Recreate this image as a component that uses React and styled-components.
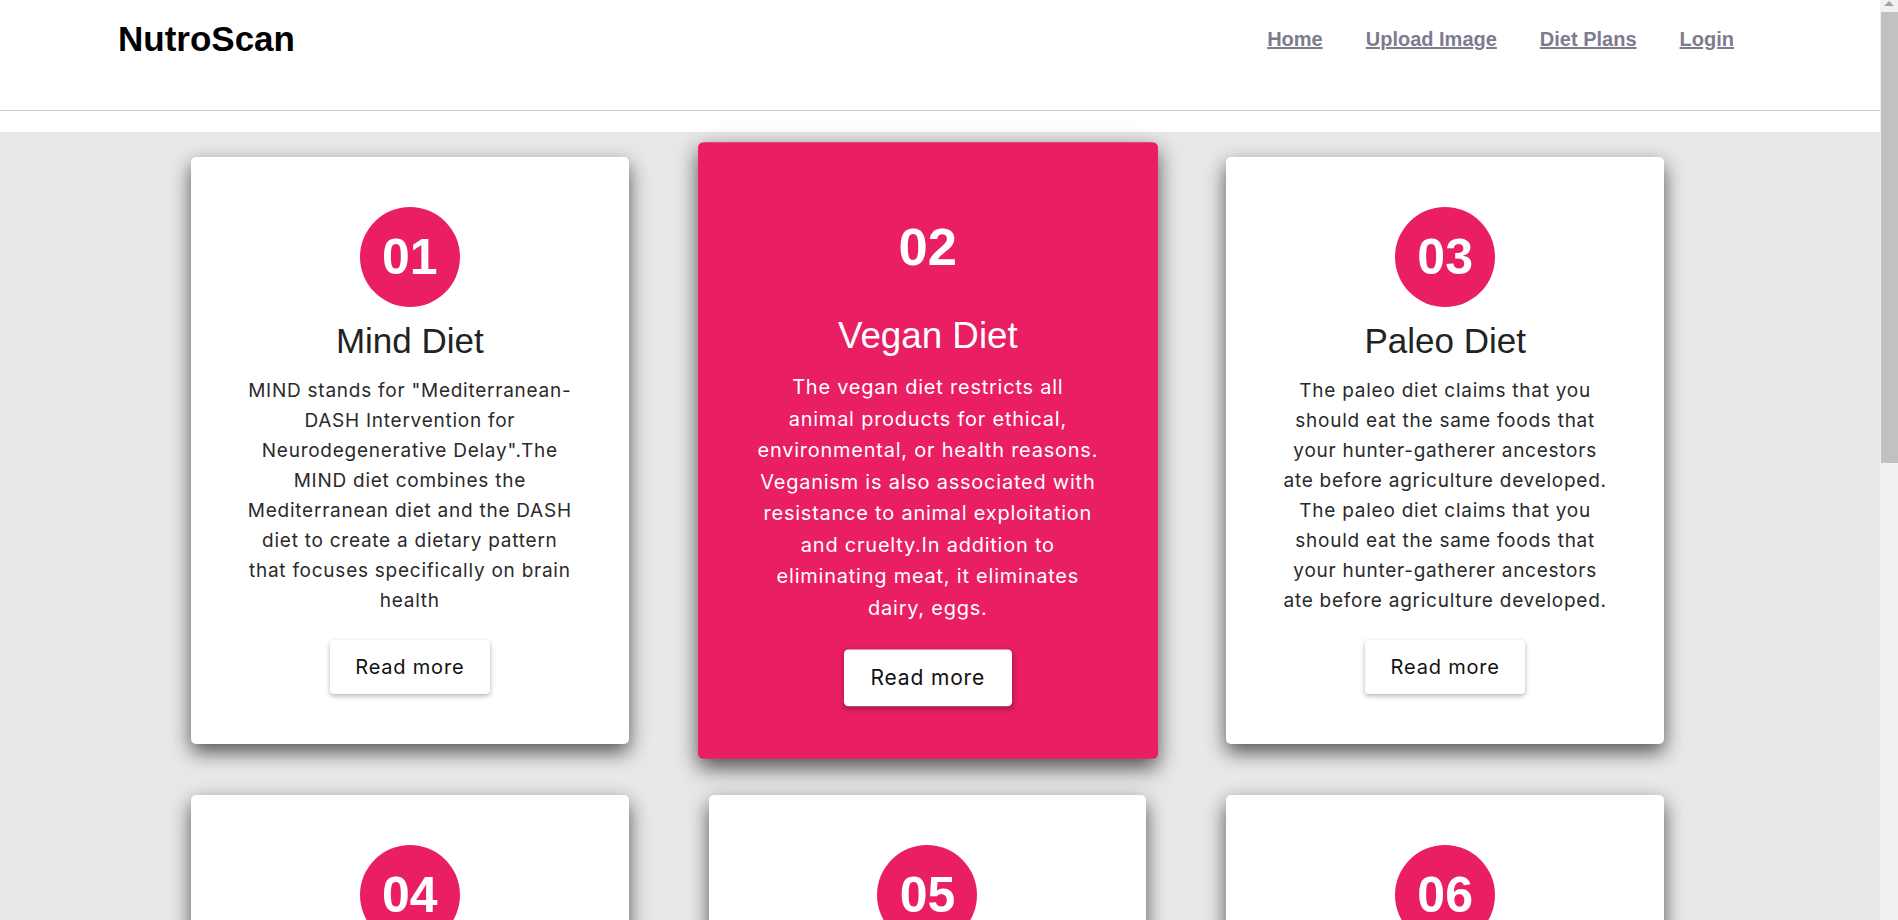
import React from 'react';
import styled, { createGlobalStyle } from 'styled-components';

const GlobalStyle = createGlobalStyle`
  html, body {
    margin: 0;
    padding: 0;
    background: #ffffff;
  }
  body {
    font-family: 'Liberation Sans', Arial, sans-serif;
    padding-right: 18px;
  }
`;

const Header = styled.header`
  box-sizing: border-box;
  height: 111px;
  padding: 19px 146px 0 118px;
  border-bottom: 1px solid #cccccc;
  display: flex;
  align-items: flex-start;
`;

const HeaderRow = styled.div`
  display: flex;
  align-items: center;
  justify-content: space-between;
  width: 100%;
  height: 40px;
`;

const Logo = styled.div`
  font-family: 'Liberation Sans', Arial, sans-serif;
  font-weight: 700;
  font-size: 35px;
  line-height: 40px;
  color: #000000;
`;

const Nav = styled.nav`
  display: flex;
  gap: 43px;
`;

const NavLink = styled.a`
  font-family: 'Liberation Sans', Arial, sans-serif;
  font-weight: 700;
  font-size: 20px;
  line-height: 24px;
  color: #7d7b8e;
  text-decoration: underline;
  cursor: pointer;
`;

const Spacer = styled.div`
  height: 21px;
  background: #ffffff;
`;

const Section = styled.section`
  background: #e8e8e8;
  padding: 25px 0 438px;
`;

const Grid = styled.div`
  width: 1473px;
  margin-left: 191px;
  display: grid;
  grid-template-columns: repeat(3, 1fr);
  column-gap: 80px;
  row-gap: 51px;
`;

const Card = styled.div`
  box-sizing: border-box;
  padding: 50px 30px;
  border-radius: 5px;
  background: ${(p) => (p.$active ? '#e91e63' : '#ffffff')};
  box-shadow: 0 8px 20px rgba(0, 0, 0, 0.65);
  transform: ${(p) => (p.$active ? 'scale(1.05)' : 'none')};
  display: flex;
  flex-direction: column;
  align-items: center;
  text-align: center;
`;

const Badge = styled.div`
  width: 100px;
  height: 100px;
  border-radius: 50%;
  background: #e91e63;
  color: #ffffff;
  display: flex;
  align-items: center;
  justify-content: center;
  font-family: 'Liberation Sans', Arial, sans-serif;
  font-weight: 700;
  font-size: 50px;
  line-height: 1;
`;

const Title = styled.h2`
  margin: 14px 0 15px;
  font-family: 'Liberation Sans', Arial, sans-serif;
  font-weight: 400;
  font-size: 35px;
  line-height: 40px;
  color: ${(p) => (p.$active ? '#ffffff' : '#222222')};
`;

const Text = styled.p`
  margin: 0;
  display: flex;
  flex-direction: column;
  align-items: center;
  font-family: Inter, 'DejaVu Sans', sans-serif;
  font-size: 19px;
  line-height: 30px;
  letter-spacing: 0.75px;
  color: ${(p) => (p.$active ? '#ffffff' : '#2a2a2a')};
`;

const Line = styled.span`
  display: block;
  white-space: nowrap;
`;

const Button = styled.button`
  margin-top: 24px;
  width: 160px;
  height: 54px;
  border: none;
  border-radius: 4px;
  background: #ffffff;
  color: #111111;
  font-family: Inter, 'DejaVu Sans', sans-serif;
  font-size: 20px;
  letter-spacing: 0.8px;
  box-shadow: 0 2px 5px rgba(0, 0, 0, 0.3);
  cursor: pointer;
`;

const ScrollTrack = styled.div`
  position: fixed;
  top: 0;
  right: 0;
  width: 18px;
  height: 100vh;
  background: #f1f1f1;
  display: flex;
  flex-direction: column;
  align-items: center;
`;

const ScrollArrow = styled.div`
  margin-top: 1px;
  width: 0;
  height: 0;
  border-left: 5px solid transparent;
  border-right: 5px solid transparent;
  border-bottom: 5px solid #a3a3a3;
`;

const ScrollThumb = styled.div`
  margin-top: 6px;
  width: 17px;
  height: 451px;
  background: #c1c1c1;
`;

const diets = [
  {
    num: '01',
    title: 'Mind Diet',
    lines: [
      'MIND stands for "Mediterranean-',
      'DASH Intervention for',
      'Neurodegenerative Delay".The',
      'MIND diet combines the',
      'Mediterranean diet and the DASH',
      'diet to create a dietary pattern',
      'that focuses specifically on brain',
      'health',
    ],
  },
  {
    num: '02',
    title: 'Vegan Diet',
    active: true,
    lines: [
      'The vegan diet restricts all',
      'animal products for ethical,',
      'environmental, or health reasons.',
      'Veganism is also associated with',
      'resistance to animal exploitation',
      'and cruelty.In addition to',
      'eliminating meat, it eliminates',
      'dairy, eggs.',
    ],
  },
  {
    num: '03',
    title: 'Paleo Diet',
    lines: [
      'The paleo diet claims that you',
      'should eat the same foods that',
      'your hunter-gatherer ancestors',
      'ate before agriculture developed.',
      'The paleo diet claims that you',
      'should eat the same foods that',
      'your hunter-gatherer ancestors',
      'ate before agriculture developed.',
    ],
  },
  {
    num: '04',
    title: 'Keto Diet',
    lines: [
      'The keto diet is a low-carb,',
      'high-fat eating plan that puts',
      'the body into a metabolic state',
      'called ketosis, where fat is',
      'burned for energy instead of',
      'carbohydrates. It limits bread,',
      'pasta, sugar and most fruits',
      'while favouring healthy fats.',
    ],
  },
  {
    num: '05',
    title: 'Atkins Diet',
    lines: [
      'The Atkins diet is a low-carb',
      'diet usually recommended for',
      'weight loss. Proponents claim',
      'that you can lose weight while',
      'eating as much protein and fat',
      'as you want, as long as you',
      'avoid foods high in carbs such',
      'as sugar and starches.',
    ],
  },
  {
    num: '06',
    title: 'Dash Diet',
    lines: [
      'Dietary Approaches to Stop',
      'Hypertension, or DASH, is an',
      'eating plan designed to help',
      'treat or prevent high blood',
      'pressure. It emphasizes fruits,',
      'vegetables, whole grains and',
      'lean meats, and is low in salt,',
      'red meat and added sugars.',
    ],
  },
];

const App = () => {
  return (
    <>
      <GlobalStyle />
      <Header>
        <HeaderRow>
          <Logo>NutroScan</Logo>
          <Nav>
            <NavLink>Home</NavLink>
            <NavLink>Upload Image</NavLink>
            <NavLink>Diet Plans</NavLink>
            <NavLink>Login</NavLink>
          </Nav>
        </HeaderRow>
      </Header>
      <Spacer />
      <Section>
        <Grid>
          {diets.map((d) => (
            <Card key={d.num} $active={d.active}>
              <Badge>{d.num}</Badge>
              <Title $active={d.active}>{d.title}</Title>
              <Text $active={d.active}>
                {d.lines.map((l, i) => (
                  <Line key={i}>{l}</Line>
                ))}
              </Text>
              <Button>Read more</Button>
            </Card>
          ))}
        </Grid>
      </Section>
      <ScrollTrack>
        <ScrollArrow />
        <ScrollThumb />
      </ScrollTrack>
    </>
  );
};

export default App;
